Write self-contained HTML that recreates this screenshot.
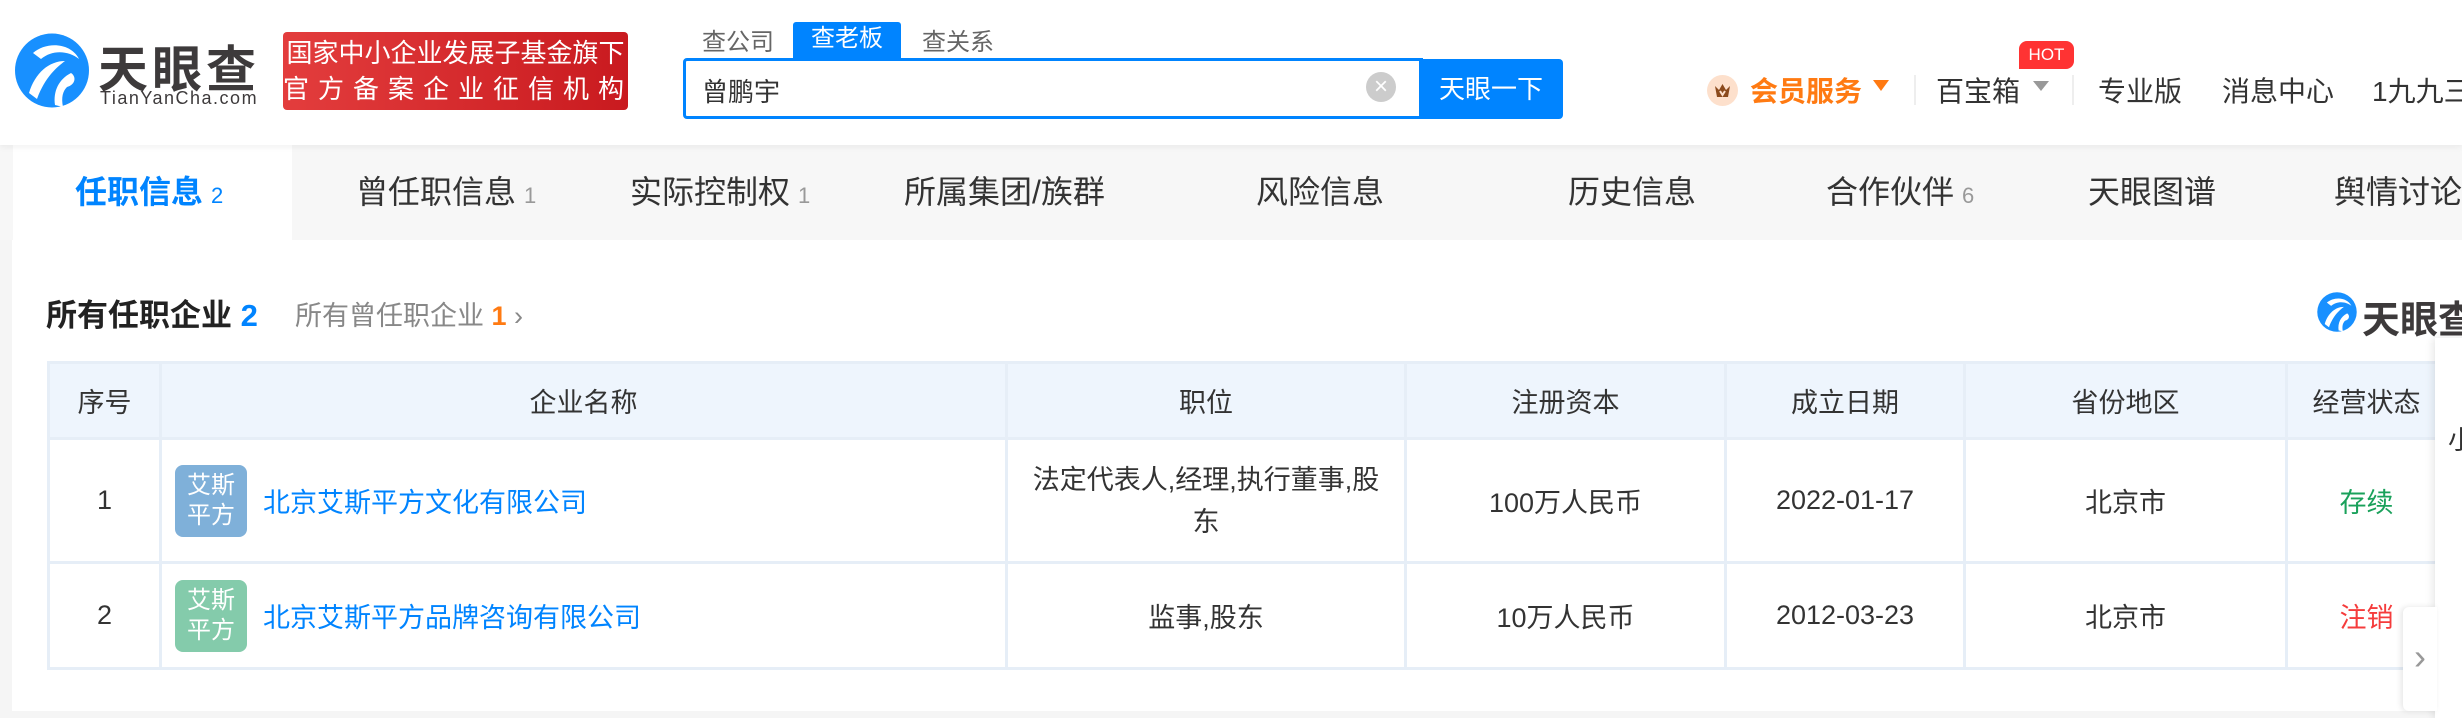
<!DOCTYPE html>
<html><head><meta charset="utf-8"><style>
*{margin:0;padding:0;box-sizing:border-box}
body{width:2462px;height:711px;overflow:hidden;background:#f5f5f5;font-family:"Liberation Sans","Noto Sans CJK SC",sans-serif;color:#333;position:relative}
.a{position:absolute;white-space:nowrap}
#hdr{position:absolute;left:0;top:0;width:2462px;height:145px;background:#fff;box-shadow:0 2px 6px rgba(0,0,0,.06);z-index:2}
#nav{position:absolute;left:0;top:145px;width:2462px;height:95px;background:#f7f7f7}
#main{position:absolute;left:12px;top:240px;width:2450px;height:471px;background:#fff}
.tab{position:absolute;top:170px;font-size:32px;color:#333;white-space:nowrap;line-height:44px}
.tab i{font-style:normal;font-size:22px;color:#999;margin-left:8px}
table{position:absolute;left:47px;top:361px;width:2398px;border-collapse:collapse;font-size:27px;color:#333;table-layout:fixed}
td,th{border:3px solid #e6eef7;text-align:center;font-weight:normal;white-space:nowrap;overflow:hidden}
th{background:#eef5fd;height:76px}
.lg{display:inline-block;width:72px;height:72px;border-radius:8px;color:#fff;font-size:24px;line-height:30px;padding-top:6px;text-align:center;vertical-align:middle;white-space:normal}
.nm{color:#0084ff;vertical-align:middle;margin-left:16px}
</style></head><body>
<div id="hdr">
<svg class="a" style="left:15px;top:33px" width="74" height="75" viewBox="0 0 74 75"><circle cx="37" cy="37.5" r="37" fill="#1890ff"/><path d="M18 20 C32 8 56 10 64 26 C54 18 38 16 26 26Z" fill="#fff"/><path d="M14 60 C20 40 34 28 50 28 C42 34 30 44 22 66Z" fill="#fff"/><path d="M40 72 C38 58 44 46 56 40 C62 44 60 52 52 54 C48 58 46 64 48 74Z" fill="#fff"/></svg>
<div class="a" style="left:98px;top:30px;font-size:50px;font-weight:bold;color:#3d3a3b;letter-spacing:4px">天眼查</div>
<div class="a" style="left:100px;top:88px;font-size:18px;color:#3d3a3b;letter-spacing:1.5px">TianYanCha.com</div>
<div class="a" style="left:283px;top:32px;width:345px;height:78px;background:linear-gradient(90deg,#e33d3d,#c91a1f);border-radius:4px;color:#fff;font-size:26px;line-height:36px;text-align:center;padding-top:3px">国家中小企业发展子基金旗下<br><span style="letter-spacing:9px">官方备案企业征信机构</span></div>
<div class="a" style="left:702px;top:22px;font-size:24px;color:#666">查公司</div>
<div class="a" style="left:793px;top:22px;width:108px;height:37px;background:#0084ff;color:#fff;font-size:24px;text-align:center;line-height:34px;border-radius:3px 3px 0 0">查老板</div>
<div class="a" style="left:922px;top:22px;font-size:24px;color:#666">查关系</div>
<div class="a" style="left:683px;top:58px;width:740px;height:61px;border:3px solid #0084ff;border-radius:4px 0 0 4px"></div>
<div class="a" style="left:702px;top:72px;font-size:26px;color:#333">曾鹏宇</div>
<div class="a" style="left:1366px;top:72px;width:30px;height:30px;border-radius:50%;background:#ccc;color:#fff;font-size:24px;line-height:29px;text-align:center">×</div>
<div class="a" style="left:1419px;top:59px;width:144px;height:60px;background:#0084ff;border-radius:0 4px 4px 0;color:#fff;font-size:26px;text-align:center;line-height:60px">天眼一下</div>
<div class="a" style="left:1707px;top:75px;width:31px;height:31px;border-radius:50%;background:#fde0cc"></div>
<svg class="a" style="left:1712px;top:80px" width="21" height="21" viewBox="0 0 21 21"><path d="M3 6 L7 10 L10.5 4 L14 10 L18 6 L16 17 L5 17Z" fill="#8b4a1c"/><path d="M8 11 L10.5 15 L13 11" stroke="#fde0cc" stroke-width="2" fill="none"/></svg>
<div class="a" style="left:1750px;top:70px;font-size:28px;font-weight:bold;color:#ff7a12">会员服务</div>
<div class="a" style="left:1873px;top:80px;width:0;height:0;border-left:8px solid transparent;border-right:8px solid transparent;border-top:11px solid #ff7a12"></div>
<div class="a" style="left:1914px;top:75px;width:2px;height:30px;background:#eee"></div>
<div class="a" style="left:1936px;top:70px;font-size:28px;color:#333">百宝箱</div>
<div class="a" style="left:2033px;top:81px;width:0;height:0;border-left:8px solid transparent;border-right:8px solid transparent;border-top:10px solid #999"></div>
<div class="a" style="left:2019px;top:41px;width:55px;height:28px;background:#f33;border-radius:8px 8px 8px 0;color:#fff;font-size:17px;text-align:center;line-height:28px">HOT</div>
<div class="a" style="left:2072px;top:75px;width:2px;height:30px;background:#eee"></div>
<div class="a" style="left:2098px;top:70px;font-size:28px;color:#333">专业版</div>
<div class="a" style="left:2222px;top:70px;font-size:28px;color:#333">消息中心</div>
<div class="a" style="left:2372px;top:70px;font-size:28px;color:#333">1九九三</div>
</div>
<div id="nav"><div class="a" style="left:13px;top:0;width:279px;height:95px;background:#fff"></div></div>
<div class="tab" style="left:75px;color:#0084ff;font-weight:bold">任职信息<i style="color:#0084ff;font-weight:normal">2</i></div>
<div class="tab" style="left:356px">曾任职信息<i>1</i></div>
<div class="tab" style="left:630px">实际控制权<i>1</i></div>
<div class="tab" style="left:904px">所属集团/族群</div>
<div class="tab" style="left:1256px">风险信息</div>
<div class="tab" style="left:1568px">历史信息</div>
<div class="tab" style="left:1826px">合作伙伴<i>6</i></div>
<div class="tab" style="left:2088px">天眼图谱</div>
<div class="tab" style="left:2334px">舆情讨论</div>
<div id="main"></div>
<div class="a" style="left:46px;top:290px;font-size:31px;font-weight:bold;color:#222">所有任职企业 <span style="color:#0084ff">2</span></div>
<div class="a" style="left:295px;top:294px;font-size:27px;color:#888">所有曾任职企业 <span style="color:#ff7a12;font-weight:bold">1</span> ›</div>
<svg class="a" style="left:2317px;top:292px" width="40" height="40" viewBox="0 0 74 75"><circle cx="37" cy="37.5" r="37" fill="#1890ff"/><path d="M18 20 C32 8 56 10 64 26 C54 18 38 16 26 26Z" fill="#fff"/><path d="M14 60 C20 40 34 28 50 28 C42 34 30 44 22 66Z" fill="#fff"/><path d="M40 72 C38 58 44 46 56 40 C62 44 60 52 52 54 C48 58 46 64 48 74Z" fill="#fff"/></svg>
<div class="a" style="left:2362px;top:289px;font-size:38px;font-weight:bold;color:#3d3a3b">天眼查</div>
<table>
<colgroup><col style="width:112px"><col style="width:846px"><col style="width:399px"><col style="width:320px"><col style="width:239px"><col style="width:322px"><col style="width:160px"></colgroup>
<tr><th>序号</th><th>企业名称</th><th>职位</th><th>注册资本</th><th>成立日期</th><th>省份地区</th><th>经营状态</th></tr>
<tr style="height:124px"><td>1</td><td style="text-align:left;padding-left:13px"><span class="lg" style="background:#7fb0d9">艾斯<br>平方</span><span class="nm">北京艾斯平方文化有限公司</span></td><td style="line-height:42px">法定代表人,经理,执行董事,股<br>东</td><td>100万人民币</td><td>2022-01-17</td><td>北京市</td><td style="color:#1aa15b">存续</td></tr>
<tr style="height:106px"><td>2</td><td style="text-align:left;padding-left:13px"><span class="lg" style="background:#84cbab">艾斯<br>平方</span><span class="nm">北京艾斯平方品牌咨询有限公司</span></td><td>监事,股东</td><td>10万人民币</td><td>2012-03-23</td><td>北京市</td><td style="color:#f53c3c">注销</td></tr>
</table>
<div class="a" style="left:2435px;top:338px;width:40px;height:380px;background:#fff;box-shadow:-2px 0 8px rgba(0,0,0,.1)"></div>
<div class="a" style="left:2448px;top:420px;font-size:26px;color:#333">小</div>
<div class="a" style="left:2403px;top:607px;width:34px;height:104px;background:#fff;border-radius:6px 0 0 6px;box-shadow:-2px 0 6px rgba(0,0,0,.1);color:#999;font-size:36px;text-align:center;line-height:100px">›</div>
</body></html>
